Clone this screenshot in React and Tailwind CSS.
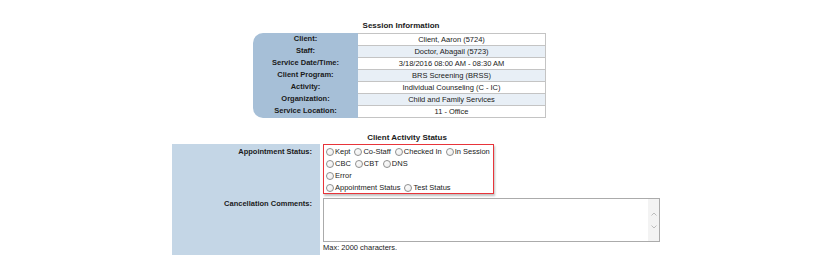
import React from "react";

const sessionRows = [
  ["Client:", "Client, Aaron (5724)"],
  ["Staff:", "Doctor, Abagail (5723)"],
  ["Service Date/Time:", "3/18/2016 08:00 AM - 08:30 AM"],
  ["Client Program:", "BRS Screening (BRSS)"],
  ["Activity:", "Individual Counseling (C - IC)"],
  ["Organization:", "Child and Family Services"],
  ["Service Location:", "11 - Office"],
];

const statusLines = [
  ["Kept", "Co-Staff", "Checked In", "In Session"],
  ["CBC", "CBT", "DNS"],
  ["Error"],
  ["Appointment Status", "Test Status"],
];

const Radio = ({ label }) => (
  <label className="flex items-center shrink-0 whitespace-nowrap mr-[4px]">
    <span className="shrink-0 w-[8px] h-[8px] rounded-full border border-[#8f8f8f] bg-gradient-to-br from-white to-[#ececec] mr-[1px]" />
    <span>{label}</span>
  </label>
);

const App = () => {
  return (
    <div className="w-[838px] h-[271px] bg-white text-[#1a1a1a] font-['Liberation_Sans',Arial,sans-serif] text-[7.5px] overflow-hidden">
      {/* Session Information */}
      <div className="ml-[253px] w-[293px] pt-[21px]">
        <div className="text-center font-bold text-[8px] leading-[10px] pl-[3px]">
          Session Information
        </div>
        <div className="flex mt-[2px]">
          <div className="w-[105px] bg-[#a6bfd7] rounded-l-[10px]">
            {sessionRows.map(([label], i) => (
              <div key={i} className="h-[12px] leading-[12px] text-center font-bold">
                {label}
              </div>
            ))}
          </div>
          <div className="w-[188px] border-t border-r border-[#c4c4c4]">
            {sessionRows.map(([, value], i) => (
              <div
                key={i}
                className={`h-[12px] leading-[11px] text-center border-b border-[#c4c4c4] ${
                  i % 2 === 1 ? "bg-[#e8eff6]" : "bg-white"
                }`}
              >
                {value}
              </div>
            ))}
          </div>
        </div>
      </div>

      {/* Client Activity Status */}
      <div className="ml-[172px] mt-[15px]">
        <div className="w-[468px] text-center font-bold text-[8px] leading-[10px] pl-[2px]">
          Client Activity Status
        </div>
        <div className="flex mt-[1px]">
          <div className="w-[148px] h-[111px] bg-[#c4d6e6] font-bold text-right pr-[8px]">
            <div className="h-[54px] pt-[2px] leading-[12px]">Appointment Status:</div>
            <div className="leading-[12px]">Cancellation Comments:</div>
          </div>
          <div className="pl-[3px]">
            <div className="w-[171px] h-[50px] border border-[#e8343a] shadow-[1px_2px_2px_rgba(0,0,0,0.25)] pt-[1px] pl-[2px]">
              {statusLines.map((line, i) => (
                <div key={i} className="flex h-[12px] items-center whitespace-nowrap">
                  {line.map((o) => (
                    <Radio key={o} label={o} />
                  ))}
                </div>
              ))}
            </div>
            <div className="mt-[4px] w-[337px] h-[44px] border border-[#ababab] bg-white flex justify-end">
              <div className="w-[11px] h-full bg-[#f3f3f3] flex flex-col items-center justify-center gap-[9px]">
                <svg width="6" height="4" viewBox="0 0 6 4">
                  <path d="M0.5 3.5 L3 1 L5.5 3.5" fill="none" stroke="#bdbdbd" strokeWidth="1" />
                </svg>
                <svg width="6" height="4" viewBox="0 0 6 4">
                  <path d="M0.5 0.5 L3 3 L5.5 0.5" fill="none" stroke="#bdbdbd" strokeWidth="1" />
                </svg>
              </div>
            </div>
            <div className="mt-[1px] leading-[10px]">Max: 2000 characters.</div>
          </div>
        </div>
      </div>
    </div>
  );
};

export default App;
